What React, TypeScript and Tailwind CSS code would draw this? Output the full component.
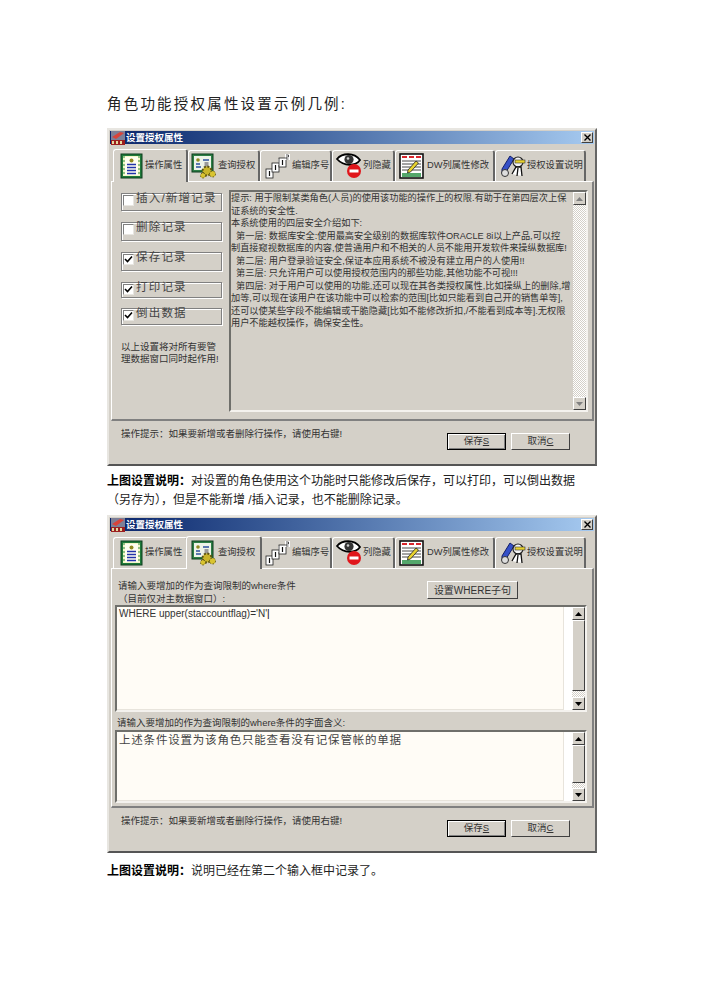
import React from "react";

const raised = "border border-t-white border-l-white border-r-[#404040] border-b-[#404040]";
const sunken = "border-2 border-t-[#6f6f6b] border-l-[#6f6f6b] border-r-[#f4f2ee] border-b-[#f4f2ee]";

const IconProps = { width: 26, height: 26, viewBox: "0 0 26 26" };

function DocIcon() {
  return (
    <svg {...IconProps}>
      <rect x="2" y="1" width="21" height="24" fill="#1f7a3a" stroke="#0c3d1c" />
      <rect x="4" y="3" width="17" height="20" fill="#f4f6c8" />
      <rect x="6" y="4" width="13" height="18" fill="#fffef0" />
      <circle cx="12.5" cy="7.5" r="2" fill="#8f8a20" />
      <path d="M8 11.5h9M8 14.5h9M8 17.5h9M8 20.5h9" stroke="#2233aa" strokeWidth="1.4" />
      <path d="M5 3v20M20 3v20" stroke="#4f9e55" strokeWidth="1.2" strokeDasharray="2 2" />
    </svg>
  );
}

function CertIcon() {
  return (
    <svg {...IconProps}>
      <rect x="1" y="1" width="21" height="18" fill="#2d7f46" stroke="#0c3d1c" />
      <rect x="3" y="3" width="17" height="14" fill="#eef4e8" />
      <path d="M5 11h4M5 14h5M12 7h6" stroke="#2c4f9e" strokeWidth="1.5" />
      <circle cx="7" cy="7" r="1.8" fill="#8f8a20" />
      <rect x="13.5" y="9" width="4" height="7" fill="#9a9a9a" />
      <circle cx="16" cy="18" r="4.5" fill="#c9b52a" stroke="#5b5210" strokeWidth="2" strokeDasharray="2 1.5" />
      <circle cx="21.5" cy="21" r="3" fill="#d9c431" stroke="#5b5210" strokeDasharray="1.5 1.5" />
      <circle cx="12" cy="22.5" r="2.5" fill="#d9c431" stroke="#5b5210" strokeDasharray="1.5 1.5" />
    </svg>
  );
}

function NumIcon({ x, y }: { x: number; y: number }) {
  return (
    <g>
      <rect x={x} y={y} width="7" height="9" fill="#fff" stroke="#222" strokeWidth="0.8" />
      <path d={`M${x + 3.5} ${y + 2}v5`} stroke="#111" strokeWidth="1.2" />
      <rect x={x + 6} y={y - 4} width="5" height="6" fill="#fff" />
      <path d={`M${x + 7} ${y - 3}h2.5v2h-2.5v2h2.5`} stroke="#111" strokeWidth="0.7" fill="none" />
    </g>
  );
}

function SeqIcon() {
  return (
    <svg {...IconProps}>
      <NumIcon x={1} y={16} />
      <NumIcon x={7} y={10} />
      <NumIcon x={14} y={5} />
    </svg>
  );
}

function EyeIcon() {
  return (
    <svg width="27" height="26" viewBox="0 0 27 26">
      <path d="M1 6C6 0 18-1 24 7 20 13 8 14 1 6Z" fill="#fff" stroke="#000" strokeWidth="1.8" />
      <circle cx="13" cy="6.5" r="4.6" fill="#333" />
      <circle cx="12" cy="5.5" r="1.3" fill="#ccc" />
      <circle cx="18" cy="18" r="7" fill="#e0161b" />
      <rect x="13.5" y="16.5" width="9" height="3" fill="#fff" />
    </svg>
  );
}

function SheetIcon() {
  return (
    <svg {...IconProps}>
      <rect x="1" y="1" width="23" height="24" fill="#fff" stroke="#111" strokeWidth="1.6" />
      <path d="M3 3h5v2H3zM10 3h5v2h-5zM17 3h5v2h-5z" fill="#d8262c" />
      <path d="M3 8h19M3 11h19M3 14h19M3 17h19" stroke="#333" strokeWidth="0.9" />
      <path d="M3 21h19M3 23h19" stroke="#1c8a3b" strokeWidth="1.5" />
      <path d="M9 17l8-9 2.5 2-8 9-3 1z" fill="#e8d22e" stroke="#222" strokeWidth="0.8" />
    </svg>
  );
}

function KeyPenIcon() {
  return (
    <svg width="26" height="24" viewBox="0 0 26 24">
      <path d="M2 15L10 2l4 3-8 13-4 1z" fill="#3550c8" stroke="#141f66" />
      <circle cx="5" cy="19" r="3.5" fill="#ddd" stroke="#333" />
      <circle cx="18" cy="8" r="5" fill="#f3f3f3" stroke="#222" strokeWidth="1.2" />
      <rect x="15" y="6" width="10" height="3" fill="#e8d22e" stroke="#333" strokeWidth="0.6" />
      <path d="M12 20l4-7h5l1 9M18 14l-1 8" fill="#fff" stroke="#111" strokeWidth="1.3" />
    </svg>
  );
}

function TitleIcon() {
  return (
    <svg width="14" height="14" viewBox="0 0 14 14" className="shrink-0">
      <rect width="14" height="14" fill="#7d7f96" />
      <path d="M1 6L9 1l4 1-8 6z" fill="#d9433a" />
      <path d="M0 9h14v5H0z" fill="#9c1f1f" />
      <path d="M1 10h2v3H1zM5 10h2v3H5zM9 10h2v3H9z" fill="#e6d9a0" />
    </svg>
  );
}

const tabs = [
  { label: "操作属性", icon: <DocIcon />, width: "w-[75px]", activeWidth: "w-[75px]", pl: "pl-[5px]", activePl: "pl-[5px]", gap: "gap-0" },
  { label: "查询授权", icon: <CertIcon />, width: "w-[72px]", activeWidth: "w-[76px] -mx-[2px]", pl: "pl-[2px]", activePl: "pl-[4px]", gap: "gap-[1px]" },
  { label: "编辑序号", icon: <SeqIcon />, width: "w-[72px]", activeWidth: "w-[72px]", pl: "pl-[4px]", activePl: "pl-[4px]", gap: "gap-[1px]" },
  { label: "列隐藏", icon: <EyeIcon />, width: "w-[63px]", activeWidth: "w-[63px]", pl: "pl-[3px]", activePl: "pl-[3px]", gap: "gap-0" },
  { label: "DW列属性修改", icon: <SheetIcon />, width: "w-[100px]", activeWidth: "w-[100px]", pl: "pl-[3px]", activePl: "pl-[3px]", gap: "gap-[2px]" },
  { label: "授权设置说明", icon: <KeyPenIcon />, width: "w-[91px]", activeWidth: "w-[91px]", pl: "pl-[4px]", activePl: "pl-[4px]", gap: "gap-[1px]" },
];

function TabBar({ active }: { active: number }) {
  return (
    <div className="flex h-[34px] mt-[3px] pl-[4px] items-end">
      {tabs.map((t, i) => (
        <div
          key={t.label}
          className={`${i === active ? t.activeWidth : t.width} ${i === active ? t.activePl : t.pl} ${t.gap} ${
            i === active ? "h-[33px] -mb-px z-10 bg-[#d4d0c8]" : "h-[31px]"
          } flex items-center border-t border-l border-r-2 border-t-white border-l-white border-r-[#666] rounded-t-[3px] overflow-hidden shrink-0`}
        >
          <span className="flex shrink-0">{t.icon}</span>
          <span className="text-[9.3px] text-[#333] whitespace-nowrap">{t.label}</span>
        </div>
      ))}
    </div>
  );
}

function Arrow({ up, dark }: { up?: boolean; dark?: boolean }) {
  return (
    <div className={`h-[13px] bg-[#d4d0c8] flex items-center justify-center shrink-0 ${raised}`}>
      <svg width="7" height="4" viewBox="0 0 7 4">
        <path d={up ? "M3.5 0L7 4H0z" : "M0 0h7L3.5 4z"} fill={dark ? "#000" : "#808080"} />
      </svg>
    </div>
  );
}

const dither = "bg-[repeating-conic-gradient(#ffffff_0_25%,#d4d0c8_0_50%)] bg-[length:2px_2px]";

function Scrollbar({ thumb, dark }: { thumb?: number; dark?: boolean }) {
  return (
    <div className="w-[13px] flex flex-col shrink-0">
      <Arrow up dark={dark} />
      <div className={`flex-1 ${dither} flex flex-col`}>
        {thumb ? <div className={`bg-[#d4d0c8] ${raised}`} style={{ height: thumb }} /> : null}
      </div>
      <Arrow dark={dark} />
    </div>
  );
}

function Check({ label, checked, h, mb }: { label: string; checked?: boolean; h: string; mb: string }) {
  return (
    <div className={`${h} ${mb} w-[101px] border border-[#808080] shadow-[inset_1px_1px_0_#ffffff,1px_1px_0_#ffffff] flex items-start pl-[1px]`}>
      <span className="w-[11px] h-[11px] mt-[1px] bg-white border border-t-[#808080] border-l-[#808080] border-r-[#e8e6e1] border-b-[#e8e6e1] flex items-center justify-center shrink-0">
        {checked ? (
          <svg width="9" height="9" viewBox="0 0 9 9">
            <path d="M1 4l2.5 2.5L8 1.5" fill="none" stroke="#000" strokeWidth="1.6" />
          </svg>
        ) : null}
      </span>
      <span className="ml-[2px] -mt-[4px] text-[11.5px] leading-[16px] tracking-[1.2px] text-[#444] whitespace-nowrap">{label}</span>
    </div>
  );
}

const hintLines = [
  "提示: 用于限制某类角色(人员)的使用该功能的操作上的权限.有助于在第四层次上保",
  "证系统的安全性.",
  "本系统使用的四层安全介绍如下:",
  "\u00a0\u00a0第一层: 数据库安全:使用最高安全级别的数据库软件ORACLE 8i以上产品,可以控",
  "制直接窥视数据库的内容,使普通用户和不相关的人员不能用开发软件来操纵数据库!",
  "\u00a0\u00a0第二层: 用户登录验证安全,保证本应用系统不被没有建立用户的人使用!!",
  "\u00a0\u00a0第三层: 只允许用户可以使用授权范围内的那些功能,其他功能不可视!!!",
  "\u00a0\u00a0第四层: 对于用户可以使用的功能,还可以现在其各类授权属性,比如操纵上的删除,增",
  "加等,可以现在该用户在该功能中可以检索的范围[比如只能看到自己开的销售单等],",
  "还可以使某些字段不能编辑或干脆隐藏[比如不能修改折扣,/不能看到成本等].无权限",
  "用户不能越权操作，确保安全性。",
];

function FirstPanel() {
  return (
    <div className="flex h-full pl-[9px] pt-[8px] gap-[6px]">
      <div className="w-[102px] pt-[3px] shrink-0">
        <Check label="插入/新增记录" h="h-[18px]" mb="mb-[11px]" />
        <Check label="删除记录" h="h-[19px]" mb="mb-[11px]" />
        <Check label="保存记录" checked h="h-[19px]" mb="mb-[11px]" />
        <Check label="打印记录" checked h="h-[16px]" mb="mb-[10px]" />
        <Check label="倒出数据" checked h="h-[17px]" mb="mb-[16px]" />
        <p className="text-[9.5px] leading-[12px] text-[#333] whitespace-nowrap">
          以上设置将对所有要管
          <br />
          理数据窗口同时起作用!
        </p>
      </div>
      <div className={`w-[359px] h-[222px] flex ${sunken} bg-[#d4d0c8]`}>
        <div className="flex-1 overflow-hidden">
          {hintLines.map((l) => (
            <div key={l} className="text-[9.2px] leading-[12.5px] text-[#333] whitespace-nowrap">
              {l}
            </div>
          ))}
        </div>
        <Scrollbar />
      </div>
    </div>
  );
}

function SecondPanel() {
  return (
    <div className="h-full pl-[3px] pt-[10px]">
      <div className="flex h-[26px] pl-[3px]">
        <p className="w-[309px] text-[9.5px] leading-[13px] text-[#333] whitespace-nowrap">
          请输入要增加的作为查询限制的where条件
          <br />
          （目前仅对主数据窗口）:
        </p>
        <div className={`w-[91px] h-[18px] mt-[2px] flex items-center justify-center text-[10px] text-[#333] ${raised}`}>
          设置WHERE子句
        </div>
      </div>
      <div className={`w-[472px] h-[107px] flex ${sunken} bg-white`}>
        <div className="flex-1 mr-[8px] bg-[#fffcf6] border-r border-b border-[#e8e4dc] pl-[2px] text-[10px] leading-[14px] text-[#333] font-['Liberation_Sans']">
          WHERE upper(staccountflag)='N'<span className="text-black">|</span>
        </div>
        <Scrollbar thumb={71} dark />
      </div>
      <p className="pl-[2px] mt-[5px] text-[9.5px] leading-[12px] text-[#333] whitespace-nowrap">
        请输入要增加的作为查询限制的where条件的字面含义:
      </p>
      <div className={`w-[472px] h-[73px] mt-[1px] flex ${sunken} bg-white`}>
        <div className="flex-1 mr-[8px] bg-[#fffcf6] border-r border-b border-[#e8e4dc] pl-[2px] pt-[2px] text-[11.5px] leading-[13px] tracking-[0.8px] text-[#444] whitespace-nowrap">
          上述条件设置为该角色只能查看没有记保管帐的单据
        </div>
        <Scrollbar thumb={38} dark />
      </div>
    </div>
  );
}

function FooterButton({ label, accel, focus }: { label: string; accel: string; focus?: boolean }) {
  return (
    <div
      className={`w-[59px] h-[17px] flex items-center justify-center text-[9.5px] text-[#333] ${
        focus ? "border border-black shadow-[inset_1px_1px_0_#ffffff,inset_-1px_-1px_0_#808080]" : raised
      }`}
    >
      {label}
      <span className="underline">{accel}</span>
    </div>
  );
}

function Dialog({ active, children }: { active: number; children: React.ReactNode }) {
  return (
    <div className="w-[490px] h-[338px] bg-[#d4d0c8] border-t-2 border-l-2 border-r-2 border-b-2 border-t-[#e8e6e1] border-l-[#e8e6e1] border-r-[#666] border-b-[#555] flex flex-col">
      <div className="mx-[1px] mt-[1px] h-[13px] flex items-center justify-between pl-[1px] pr-[1px] bg-gradient-to-r from-[#0a246a] to-[#a6caf0] shrink-0">
        <div className="flex items-center gap-[1px]">
          <TitleIcon />
          <span className="text-[9.5px] font-bold text-white leading-none">设置授权属性</span>
        </div>
        <div className={`w-[12px] h-[11px] bg-[#d4d0c8] flex items-center justify-center ${raised}`}>
          <svg width="7" height="7" viewBox="0 0 7 7">
            <path d="M0.5 0.5l6 6M6.5 0.5l-6 6" stroke="#000" strokeWidth="1.4" />
          </svg>
        </div>
      </div>
      <TabBar active={active} />
      <div className="ml-[2px] w-[483px] h-[240px] border-t border-l border-r-2 border-b-2 border-t-white border-l-white border-r-[#808080] border-b-[#808080] shrink-0">
        {children}
      </div>
      <div className="flex pl-[12px] pt-[6px]">
        <span className="w-[326px] text-[9.5px] leading-[14px] text-[#333] whitespace-nowrap">
          操作提示：如果要新增或者删除行操作，请使用右键!
        </span>
        <div className="flex gap-[5px] mt-[6px]">
          <FooterButton label="保存" accel="S" focus />
          <FooterButton label="取消" accel="C" />
        </div>
      </div>
    </div>
  );
}

function Note({ children }: { children: React.ReactNode }) {
  return <p className="text-[12px] leading-[19px] text-[#222] w-[490px]">{children}</p>;
}

export default function App() {
  return (
    <div className="w-[703px] h-[994px] bg-white overflow-hidden pl-[107px] pt-[92px] font-['Liberation_Sans','Noto_Sans_CJK_SC',sans-serif]">
      <h1 className="text-[14.5px] leading-[24px] font-normal tracking-[2.2px] text-[#222] whitespace-nowrap">
        角色功能授权属性设置示例几例:
      </h1>
      <div className="mt-[12px]">
        <Dialog active={0}>
          <FirstPanel />
        </Dialog>
      </div>
      <div className="mt-[6px]">
        <Note>
          <b className="text-black">上图设置说明：</b>对设置的角色使用这个功能时只能修改后保存，可以打印，可以倒出数据
          <br />
          （另存为），但是不能新增 /插入记录，也不能删除记录。
        </Note>
      </div>
      <div className="mt-[5px]">
        <Dialog active={1}>
          <SecondPanel />
        </Dialog>
      </div>
      <div className="mt-[9px]">
        <Note>
          <b className="text-black">上图设置说明：</b>说明已经在第二个输入框中记录了。
        </Note>
      </div>
    </div>
  );
}
